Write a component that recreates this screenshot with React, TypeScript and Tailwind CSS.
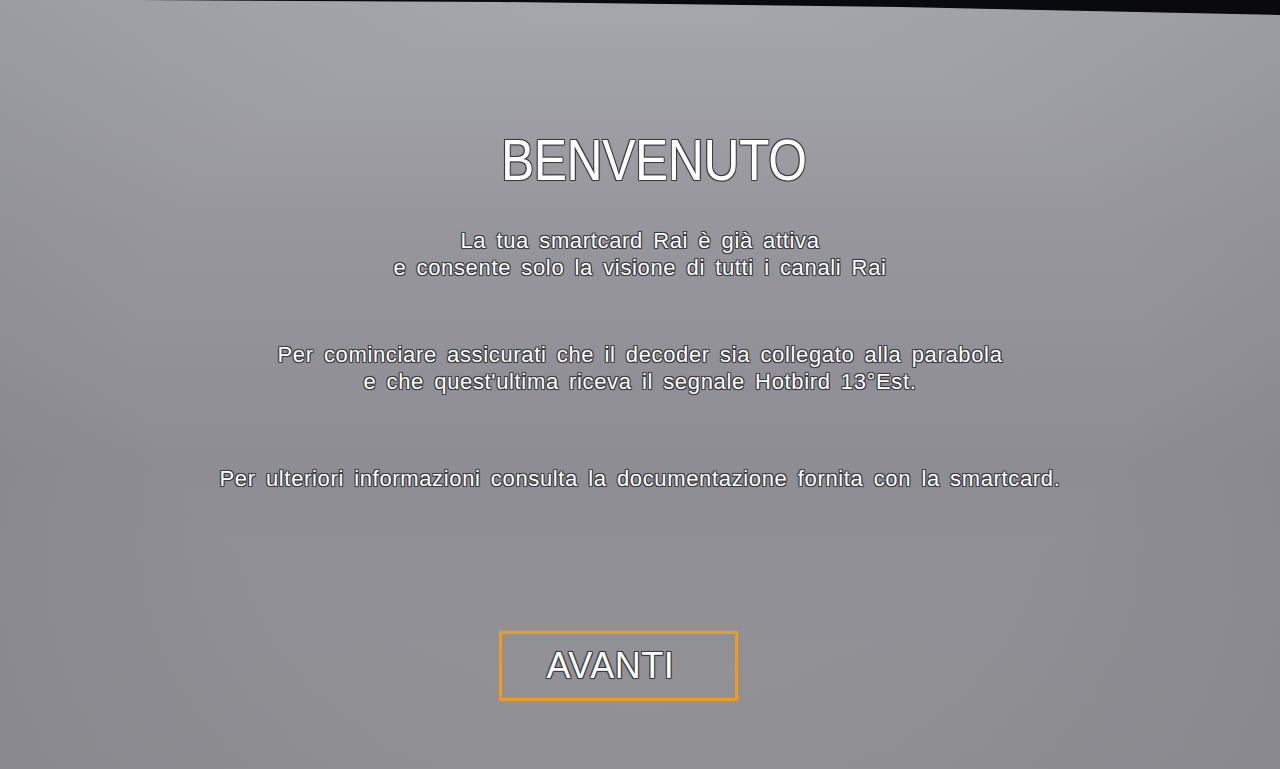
import React from 'react';

const outline =
  '[text-shadow:-1px_-1px_0_#3a3a3e,1px_-1px_0_#3a3a3e,-1px_1px_0_#3a3a3e,1px_1px_0_#3a3a3e,0_0_2px_#2a2a2e]';

const body = `text-center text-[22px] leading-[27px] tracking-[0.65px] [word-spacing:3.5px] ${outline}`;

const App: React.FC = () => {
  return (
    <div className="relative w-[1280px] h-[769px] overflow-hidden bg-[linear-gradient(180deg,#a6a6ad_0%,#96969c_30%,#8d8d93_60%,#939398_100%)] font-['Liberation_Sans',Arial,sans-serif] text-white">
      {/* soft vignette from the photo */}
      <div className="absolute inset-0 bg-[radial-gradient(ellipse_at_50%_45%,rgba(255,255,255,0)_55%,rgba(60,60,70,0.12)_100%)]" />

      {/* black edge of the screen at the top */}
      <svg className="absolute top-0 left-0" width="1280" height="20" viewBox="0 0 1280 20">
        <polygon points="140,0 1280,0 1280,15 900,7 500,2" fill="#0a0a0c" />
      </svg>

      <div className="relative flex flex-col items-center pt-[131px]">
        {/* Title */}
        <h1 className={`ml-[28px] text-[58px] leading-[58px] tracking-[-0.5px] font-normal scale-x-[0.86] ${outline}`}>
          BENVENUTO
        </h1>

        {/* Body */}
        <div className={`mt-[38px] ${body}`}>
          <p>La tua smartcard Rai è già attiva</p>
          <p>e consente solo la visione di tutti i canali Rai</p>
        </div>

        <div className={`mt-[60px] ${body}`}>
          <p>Per cominciare assicurati che il decoder sia collegato alla parabola</p>
          <p>e che quest'ultima riceva il segnale Hotbird 13°Est.</p>
        </div>

        <div className={`mt-[70px] ${body}`}>
          <p>Per ulteriori informazioni consulta la documentazione fornita con la smartcard.</p>
        </div>

        {/* Button */}
        <button className="mt-[139px] mr-[44px] w-[239px] h-[70px] border-[3px] border-[#f39a1e] flex items-center pl-[45px]">
          <span className={`text-[36px] leading-[36px] tracking-[0.5px] ${outline}`}>AVANTI</span>
        </button>
      </div>
    </div>
  );
};

export default App;
